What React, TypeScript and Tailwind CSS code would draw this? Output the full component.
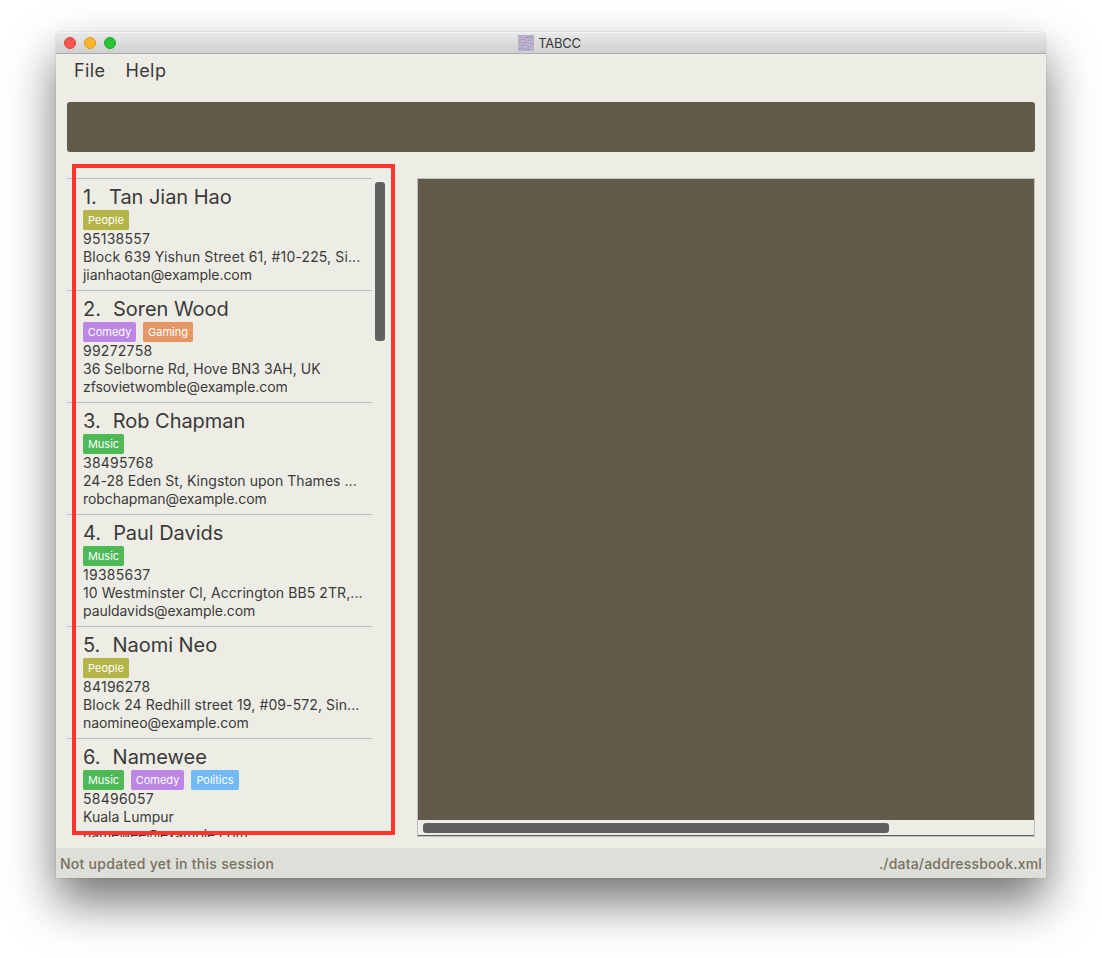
type Tag = "People" | "Comedy" | "Gaming" | "Music" | "Politics";

const tagStyles: Record<Tag, string> = {
  People: "w-[46px] bg-[#b3b548]",
  Comedy: "w-[53px] bg-[#bb86e6]",
  Gaming: "w-[50px] bg-[#e59866]",
  Music: "w-[41px] bg-[#4cb856]",
  Politics: "w-[48px] bg-[#72bbf7]",
};

interface Person {
  id: number;
  name: string;
  tags: Tag[];
  phone: string;
  address: string;
  addressTracking: string;
  email: string;
}

const people: Person[] = [
  { id: 1, name: "Tan Jian Hao", tags: ["People"], phone: "95138557", address: "Block 639 Yishun Street 61, #10-225, Si...", addressTracking: "tracking-[0.13px]", email: "jianhaotan@example.com" },
  { id: 2, name: "Soren Wood", tags: ["Comedy", "Gaming"], phone: "99272758", address: "36 Selborne Rd, Hove BN3 3AH, UK", addressTracking: "tracking-[0.02px]", email: "zfsovietwomble@example.com" },
  { id: 3, name: "Rob Chapman", tags: ["Music"], phone: "38495768", address: "24-28 Eden St, Kingston upon Thames ...", addressTracking: "tracking-[0.04px]", email: "robchapman@example.com" },
  { id: 4, name: "Paul Davids", tags: ["Music"], phone: "19385637", address: "10 Westminster Cl, Accrington BB5 2TR,...", addressTracking: "tracking-[0.08px]", email: "pauldavids@example.com" },
  { id: 5, name: "Naomi Neo", tags: ["People"], phone: "84196278", address: "Block 24 Redhill street 19, #09-572, Sin...", addressTracking: "tracking-[0.1px]", email: "naomineo@example.com" },
  { id: 6, name: "Namewee", tags: ["Music", "Comedy", "Politics"], phone: "58496057", address: "Kuala Lumpur", addressTracking: "tracking-normal", email: "namewee@example.com" },
];

function PersonCard({ person }: { person: Person }) {
  return (
    <li className="h-28 border-t border-[#bfbfbf] pl-4 pt-[5px] whitespace-pre">
      <div className="h-[26px] text-[20px] leading-[26px] tracking-[-0.04px]">
        <span className="mr-px">{person.id}.{"  "}</span>
        {person.name}
      </div>
      <div className="flex h-5 gap-[7px]">
        {person.tags.map((tag) => (
          <span key={tag} className={`h-5 rounded-[2px] text-center text-[11px] leading-5 text-white ${tagStyles[tag]}`}>
            {tag}
          </span>
        ))}
      </div>
      <div className="text-[14px] leading-[18px]">
        <p className="tracking-[0.25px]">{person.phone}</p>
        <p className={person.addressTracking}>{person.address}</p>
        <p className="tracking-[-0.06px]">{person.email}</p>
      </div>
    </li>
  );
}

function AppIcon() {
  return (
    <svg width="16" height="16" viewBox="0 0 16 16" shapeRendering="crispEdges">
      <rect width="16" height="16" fill="#b8afca" />
      <path d="M1 1.5h3M7 2.5h4M12 1.5h3M2 4.5h5M10 5.5h4M1 7.5h2M5 7.5h4M12 8.5h3M2 10.5h5M9 11.5h4M1 13.5h4M7 14.5h6" stroke="#aa9cc4" />
      <path d="M5 1.5h1M1 3.5h4M8 4.5h2M3 6.5h4M11 6.5h3M8 9.5h3M1 11.5h2M6 12.5h3M12 13.5h2" stroke="#c8b7cd" />
    </svg>
  );
}

export default function App() {
  return (
    <div className="h-[958px] w-[1102px] overflow-hidden bg-white px-14 pt-8 font-['Inter','Liberation_Sans',sans-serif] text-[#3a3a3a]">
      <div className="flex h-[846px] w-[990px] flex-col rounded-t-[5px] bg-[#eeede5] shadow-[0_0_1px_rgba(0,0,0,0.5),0_24px_48px_rgba(0,0,0,0.55)]">
        <header className="relative flex h-[22px] shrink-0 items-center justify-center gap-1 rounded-t-[5px] border-b border-[#acacac] bg-linear-to-b from-[#e9e9e9] to-[#d0d0d0] pr-[3px] shadow-[inset_0_1px_0_#f4f4f4]">
          <div className="absolute left-2 top-[5px] flex gap-2">
            <span className="size-3 rounded-full border border-[#df3e38] bg-[#fc5551]" />
            <span className="size-3 rounded-full border border-[#dc9a24] bg-[#fdb42a]" />
            <span className="size-3 rounded-full border border-[#1aa62b] bg-[#27c436]" />
          </div>
          <AppIcon />
          <h1 className="text-[13px] leading-4 tracking-[-0.25px]">TABCC</h1>
        </header>

        <nav className="flex h-12 shrink-0 gap-5 pl-[18px] pt-1 text-[18px] leading-[26px] tracking-[0.4px]">
          <span>File</span>
          <span>Help</span>
        </nav>

        <div className="mx-[11px] h-[50px] shrink-0 rounded-[3px] bg-[#625a4a]" />

        <main className="relative flex h-[696px] shrink-0 pl-[11px] pt-[26px]">
          <ul className="h-[659px] w-[305px] overflow-hidden">
            {people.map((person) => (
              <PersonCard key={person.id} person={person} />
            ))}
          </ul>
          <div className="ml-[3px] mt-1 h-[159px] w-2.5 rounded-[3px] bg-[#606060]" />
          <section className="ml-8 flex h-[659px] w-[618px] flex-col border border-[#bfbfbf]">
            <div className="h-[641px] shrink-0 bg-[#625a4a]" />
            <div className="h-4 shrink-0 border-b border-[#606060] pl-[5px] pt-[3px]">
              <div className="h-2.5 w-[466px] rounded-[3px] bg-[#606060]" />
            </div>
          </section>
          <div className="absolute left-4 top-3 h-[671px] w-[323px] border-4 border-[#ff352d]" />
        </main>

        <footer className="flex h-[30px] shrink-0 items-center justify-between bg-[#dddfd8] px-1 text-[14px] font-medium text-[#777061]">
          <span className="tracking-[0.27px]">Not updated yet in this session</span>
          <span className="tracking-[0.18px]">./data/addressbook.xml</span>
        </footer>
      </div>
    </div>
  );
}
